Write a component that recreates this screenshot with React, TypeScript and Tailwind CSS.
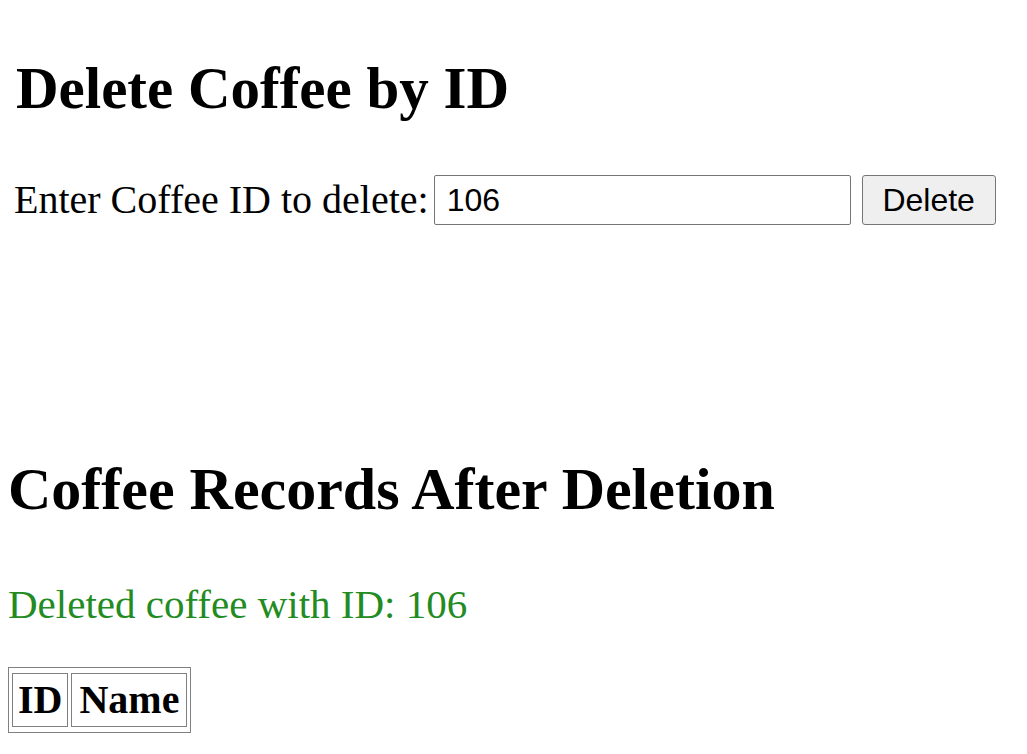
import React from "react";

export default function App() {
  return (
    <div className="min-h-[754px] w-[1027px] bg-white text-black" style={{ fontFamily: '"Liberation Serif", "Times New Roman", serif' }}>
      <div className="pl-4 pt-[54px]">
        <h1 className="m-0 text-[59px] font-bold leading-[69px]">Delete Coffee by ID</h1>
        <div className="mt-[52px] flex items-center text-[40px] leading-[46px]">
          <span className="-ml-[2px]">Enter Coffee ID to delete:</span>
          <input
            defaultValue="106"
            className="ml-[5px] h-[50px] w-[417px] rounded-[2px] border border-[#767676] bg-white px-3 text-[32px] text-black outline-none"
            style={{ fontFamily: '"Liberation Sans", Arial, sans-serif' }}
          />
          <button
            className="ml-[11px] h-[50px] w-[134px] rounded-[3px] border border-[#767676] bg-[#efefef] text-[32px] text-black"
            style={{ fontFamily: '"Liberation Sans", Arial, sans-serif' }}
          >
            Delete
          </button>
        </div>
      </div>
      <div className="pl-2 pt-[230px]">
        <h2 className="m-0 text-[60px] font-bold leading-[69px]">Coffee Records After Deletion</h2>
        <p className="m-0 mt-[57px] text-[41px] leading-[46px] text-[#228b22]">Deleted coffee with ID: 106</p>
        <table className="mt-[40px] border-separate border-spacing-x-[3px] border-spacing-y-[5px] border border-[#808080] text-[40px] leading-[46px]">
          <thead>
            <tr>
              <th className="border border-[#808080] px-[5px] py-[3px] font-bold">ID</th>
              <th className="border border-[#808080] px-[7px] py-[3px] font-bold">Name</th>
            </tr>
          </thead>
        </table>
      </div>
    </div>
  );
}
